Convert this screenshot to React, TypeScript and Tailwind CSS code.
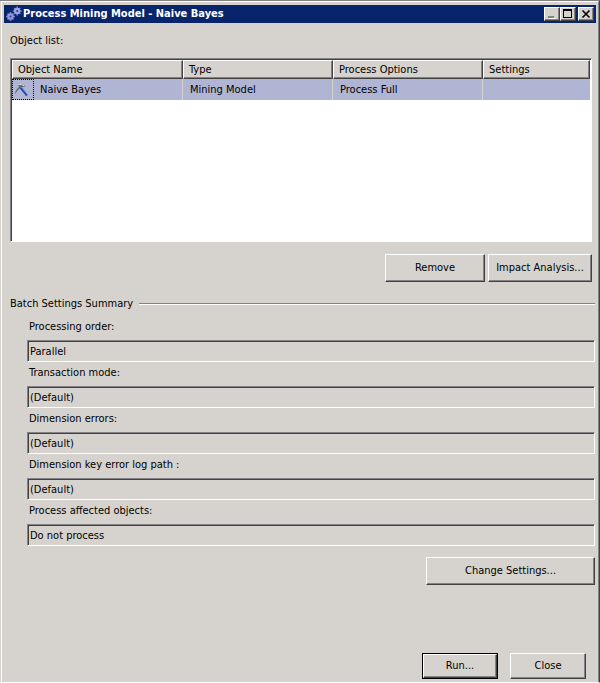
import React from 'react';

interface MiningObject {
  name: string;
  type: string;
  options: string;
  settings: string;
}

const objects: MiningObject[] = [
  { name: 'Naive Bayes', type: 'Mining Model', options: 'Process Full', settings: '' }
];

const summary = [
  { id: 'order', label: 'Processing order:', value: 'Parallel' },
  { id: 'transaction', label: 'Transaction mode:', value: '(Default)' },
  { id: 'dimension-errors', label: 'Dimension errors:', value: '(Default)' },
  { id: 'log-path', label: 'Dimension key error log path :', value: '(Default)' },
  { id: 'affected', label: 'Process affected objects:', value: 'Do not process' }
];

const columns = ['Object Name', 'Type', 'Process Options', 'Settings'];

const raised =
  'bg-[#d6d3ce] border border-t-white border-l-white border-b-[#424142] border-r-[#424142] shadow-[inset_-1px_-1px_0_#848284]';
const sunken =
  'border border-t-[#848284] border-l-[#848284] border-b-white border-r-white shadow-[inset_1px_1px_0_#424142]';

const GearsIcon = () => (
  <svg className="h-4 w-4 shrink-0" viewBox="0 0 16 16" aria-hidden="true">
    <g stroke="#7880cc" strokeWidth="1.6">
      <path d="M4.5 6v9M0 10.5h9M1.5 7.5l6 6M7.5 7.5l-6 6" />
      <path d="M11.2 0.5v9M6.7 5h9M8.2 2l6 6M14.2 2l-6 6" />
    </g>
    <circle cx="4.5" cy="10.5" r="3.2" fill="#9298dc" />
    <circle cx="11.2" cy="5" r="3.2" fill="#9ba2e4" />
    <circle cx="4.5" cy="10.5" r="1.1" fill="#34438c" />
    <circle cx="11.2" cy="5" r="1.1" fill="#34438c" />
  </svg>
);

const PickaxeIcon = () => (
  <svg className="h-4 w-4 shrink-0" viewBox="0 0 16 16" aria-hidden="true">
    <path d="M6.5 5.5 L13 13.5" stroke="#1849b5" strokeWidth="2" fill="none" />
    <path d="M7.2 5 L13.6 13" stroke="#6b9ce8" strokeWidth="0.6" fill="none" />
    <path d="M1 12.5 C1.5 8.5 3 6.5 5 5 L3.5 2.5 C6.5 1.5 9.5 2 11.5 4.5 L7.2 5.2 C5 6.8 3 8.5 1 12.5 Z" fill="#636973" />
    <path d="M4 2.8 C6.5 2.2 8.5 2.6 10.3 3.9" stroke="#e2e5ea" strokeWidth="1" fill="none" />
  </svg>
);

const TitleBar = () => (
  <header className="flex h-[18px] items-center bg-[#08246b] px-[2px]">
    <GearsIcon />
    <h1 className="ml-px flex-1 whitespace-nowrap text-[11px] font-bold text-white">
      Process Mining Model - Naive Bayes
    </h1>
    <button aria-label="Minimize" className={`h-[14px] w-4 ${raised}`}>
      <svg className="h-3 w-[14px]" viewBox="0 0 14 12" shapeRendering="crispEdges">
        <path d="M3 8h6v2H3z" fill="#848284" />
        <path d="M4 10h6v1H4z" fill="#fff" />
      </svg>
    </button>
    <button aria-label="Maximize" className={`h-[14px] w-4 ${raised}`}>
      <svg className="h-3 w-[14px]" viewBox="0 0 14 12" shapeRendering="crispEdges">
        <path d="M2 1h9v9H2zM3 3v6h7V3z" fill="#000" fillRule="evenodd" />
      </svg>
    </button>
    <button aria-label="Close window" className={`ml-[2px] h-[14px] w-4 ${raised}`}>
      <svg className="h-3 w-[14px]" viewBox="0 0 14 12">
        <path d="M3.5 2.5l7 7M10.5 2.5l-7 7" stroke="#000" strokeWidth="1.6" />
      </svg>
    </button>
  </header>
);

const ObjectList = () => (
  <div className={`mr-[3px] h-[184px] bg-white px-px pt-px ${sunken}`}>
    <table aria-labelledby="object-list" className="w-full table-fixed border-separate border-spacing-0">
      <colgroup>
        <col className="w-[171px]" />
        <col className="w-[150px]" />
        <col className="w-[150px]" />
        <col />
      </colgroup>
      <thead>
        <tr>
          {columns.map((column) => (
            <th key={column} className={`h-[19px] px-[5px] py-0 text-left font-normal ${raised}`}>
              {column}
            </th>
          ))}
        </tr>
      </thead>
      <tbody>
        {objects.map((item) => (
          <tr key={item.name} className="bg-[#b0b5d3]">
            <td className="h-[21px] border-r border-[#d6d3ce] p-0">
              <div className="flex items-center">
                <span className="flex h-[21px] w-[22px] items-center border border-dotted border-black pl-px">
                  <PickaxeIcon />
                </span>
                <span className="ml-[6px]">{item.name}</span>
              </div>
            </td>
            <td className="border-r border-[#d6d3ce] px-[7px] py-0">{item.type}</td>
            <td className="border-r border-[#d6d3ce] px-[7px] py-0">{item.options}</td>
            <td className="px-[7px] py-0">{item.settings}</td>
          </tr>
        ))}
      </tbody>
    </table>
  </div>
);

const App: React.FC = () => {
  return (
    <div className="flex min-h-screen flex-col border-t border-r border-b border-t-[#848284] border-r-[#424142] border-b-white bg-[#d6d3ce] pl-px font-['DejaVu_Sans_Condensed','DejaVu_Sans',sans-serif] text-[11px] leading-[14px] text-black">
      <div className="flex flex-1 flex-col border-t border-r border-l border-t-white border-r-[#848284] border-l-white px-[2px] pt-[3px]">
        <TitleBar />

        <main className="flex flex-1 flex-col pr-px pl-[6px]">
          <h2 id="object-list" className="mt-[11px] mb-[10px]">Object list:</h2>
          <ObjectList />
          <div className="mt-3 mr-[3px] flex justify-end gap-[3px]">
            <button className={`h-7 w-[100px] ${raised}`}>Remove</button>
            <button className={`h-7 w-[104px] ${raised}`}>Impact Analysis...</button>
          </div>

          <section className="mt-[15px]">
            <div className="flex items-center gap-[6px]">
              <h2>Batch Settings Summary</h2>
              <div className="h-[2px] flex-1 border-t border-b border-t-[#848284] border-b-white" />
            </div>
            <div className="mt-[9px] pl-[17px]">
              {summary.map((field) => (
                <div key={field.id} className="mb-1">
                  <label htmlFor={field.id} className="mb-[6px] block pl-[2px]">
                    {field.label}
                  </label>
                  <input
                    id={field.id}
                    readOnly
                    value={field.value}
                    className={`block h-[22px] w-full bg-[#d6d3ce] px-[2px] outline-none ${sunken}`}
                  />
                </div>
              ))}
            </div>
            <div className="mt-[11px] flex justify-end">
              <button className={`h-7 w-[169px] ${raised}`}>Change Settings...</button>
            </div>
          </section>

          <footer className="mt-auto mr-[9px] mb-[3px] flex justify-end gap-3 pt-4">
            <div className="flex border border-black">
              <button className={`h-6 w-[74px] ${raised}`}>Run...</button>
            </div>
            <button className={`h-[26px] w-[76px] ${raised}`}>Close</button>
          </footer>
        </main>
      </div>
    </div>
  );
};

export default App;
